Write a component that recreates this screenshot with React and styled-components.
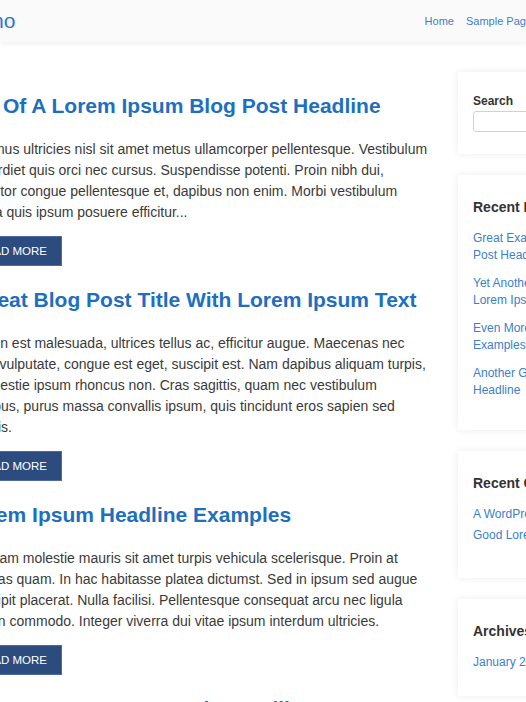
import React from "react";
import styled, { createGlobalStyle } from "styled-components";

const GlobalStyle = createGlobalStyle`
  * { box-sizing: border-box; }
  html, body { margin: 0; padding: 0; background: #fff; }
  body {
    font-family: "Liberation Sans", Arial, sans-serif;
    color: #3a3a3a;
    overflow: hidden;
  }
`;

const posts = [
  {
    title: "Great Example Of A Lorem Ipsum Blog Post Headline",
    excerpt:
      "Donec at tincidunt Vivamus ultricies nisl sit amet metus ullamcorper pellentesque. Vestibulum nunc a varius nibh imperdiet quis orci nec cursus. Suspendisse potenti. Proin nibh dui, pellentesque felis, a auctor congue pellentesque et, dapibus non enim. Morbi vestibulum vehicula sed ac pharetra quis ipsum posuere efficitur...",
  },
  {
    title: "Yet Another Great Blog Post Title With Lorem Ipsum Text",
    excerpt:
      "Curabitur sapien tellus, in est malesuada, ultrices tellus ac, efficitur augue. Maecenas nec sollicitudin magna diam vulputate, congue est eget, suscipit est. Nam dapibus aliquam turpis, donec aliquam velit, molestie ipsum rhoncus non. Cras sagittis, quam nec vestibulum pellentesque odio faucibus, purus massa convallis ipsum, quis tincidunt eros sapien sed pellentesque quis lobortis.",
  },
  {
    title: "Even More Lorem Ipsum Headline Examples",
    excerpt:
      "Sed pretium metus. Nullam molestie mauris sit amet turpis vehicula scelerisque. Proin at faucibus metus at egestas quam. In hac habitasse platea dictumst. Sed in ipsum sed augue tempus, eget diam suscipit placerat. Nulla facilisi. Pellentesque consequat arcu nec ligula aliquam dolor volutpat, in commodo. Integer viverra dui vitae ipsum interdum ultricies.",
  },
  {
    title: "Another Great Lorem Ipsum Example Headline",
    excerpt:
      "Phasellus vitae arcu nec lorem consequat tincidunt. Donec sit amet nibh sed magna vulputate viverra.",
  },
];

const comments = ["A WordPress Commenter on Hello world!", "Good Lorem Ipsum Example"];

function App() {
  return (
    <>
      <GlobalStyle />
      <Viewport>
        <Header>
          <HeaderInner>
            <Logo>WordPress Demo</Logo>
            <Nav>
              <NavLink href="#">Home</NavLink>
              <NavLink href="#">Sample Page</NavLink>
            </Nav>
          </HeaderInner>
        </Header>

        <Layout>
          <Main>
            {posts.map((post) => (
              <Post key={post.title}>
                <PostTitle>{post.title}</PostTitle>
                <Excerpt>{post.excerpt}</Excerpt>
                <MoreButton href="#">Read More</MoreButton>
              </Post>
            ))}
          </Main>

          <Sidebar>
            <Widget>
              <SearchLabel htmlFor="s">Search</SearchLabel>
              <SearchInput id="s" type="text" />
            </Widget>

            <Widget>
              <WidgetTitle>Recent Posts</WidgetTitle>
              <LinkList $gap={11} $after={9}>
                {posts.map((post) => (
                  <li key={post.title}>
                    <SideLink href="#">{post.title}</SideLink>
                  </li>
                ))}
              </LinkList>
            </Widget>

            <Widget>
              <WidgetTitle>Recent Comments</WidgetTitle>
              <LinkList $gap={4} $after={12}>
                {comments.map((c) => (
                  <li key={c}>
                    <SideLink href="#">{c}</SideLink>
                  </li>
                ))}
              </LinkList>
            </Widget>

            <Widget>
              <WidgetTitle>Archives</WidgetTitle>
              <LinkList $gap={4} $after={3}>
                <li>
                  <SideLink href="#">January 2020</SideLink>
                </li>
              </LinkList>
            </Widget>
          </Sidebar>
        </Layout>
      </Viewport>
    </>
  );
}

export default App;

const Viewport = styled.div`
  width: 526px;
  height: 702px;
  overflow: hidden;
`;

const Header = styled.header`
  position: relative;
  z-index: 1;
  height: 42px;
  background: #fafafa;
  box-shadow: 0 2px 4px rgba(0, 0, 0, 0.06);
`;

const HeaderInner = styled.div`
  width: 682px;
  height: 100%;
  margin-left: -150px;
  display: flex;
  align-items: center;
  justify-content: space-between;
`;

const Logo = styled.div`
  font-size: 21px;
  color: #2a78cc;
  white-space: nowrap;
`;

const Nav = styled.nav`
  display: flex;
  gap: 12px;
`;

const NavLink = styled.a`
  font-size: 11px;
  color: #3f7fc6;
  text-decoration: none;
`;

const Layout = styled.div`
  width: 863px;
  margin-left: -150px;
  display: flex;
  align-items: flex-start;
  gap: 18px;
`;

const Main = styled.main`
  width: 590px;
  flex-shrink: 0;
  padding-top: 50px;
`;

const Post = styled.article`
  margin-bottom: 20px;
`;

const PostTitle = styled.h2`
  margin: 0 0 20px;
  font-size: 21px;
  line-height: 27px;
  font-weight: 700;
  color: #1e6fbf;
`;

const Excerpt = styled.p`
  margin: 0 0 13px;
  font-size: 14px;
  line-height: 21px;
  color: #3a3a3a;
`;

const MoreButton = styled.a`
  display: block;
  width: 212px;
  height: 30px;
  padding-right: 14px;
  text-align: right;
  line-height: 28px;
  font-size: 11.5px;
  text-transform: uppercase;
  text-decoration: none;
  color: #fff;
  background: #2c4c80;
  border: 1px solid #4d6c9c;
`;

const Sidebar = styled.aside`
  width: 255px;
  flex-shrink: 0;
  padding-top: 30px;
  display: flex;
  flex-direction: column;
  gap: 21px;
`;

const Widget = styled.section`
  background: #fff;
  padding: 22px 15px;
  box-shadow: 0 0 8px rgba(0, 0, 0, 0.08);
`;

const SearchLabel = styled.label`
  display: block;
  margin-bottom: 2px;
  font-size: 12px;
  line-height: 15px;
  font-weight: 700;
  color: #333;
`;

const SearchInput = styled.input`
  display: block;
  width: 100%;
  height: 21px;
  border: 1px solid #d2d2d2;
  border-radius: 3px;
  background: #fff;
`;

const WidgetTitle = styled.h3`
  margin: 0 0 13px;
  font-size: 14px;
  line-height: 20px;
  font-weight: 700;
  color: #333;
`;

const LinkList = styled.ul`
  list-style: none;
  margin: 0 0 ${(p) => p.$after}px;
  padding: 0;
  display: flex;
  flex-direction: column;
  gap: ${(p) => p.$gap}px;

  li {
    font-size: 12px;
    line-height: 17px;
  }
`;

const SideLink = styled.a`
  color: #3b80cc;
  text-decoration: none;
`;
